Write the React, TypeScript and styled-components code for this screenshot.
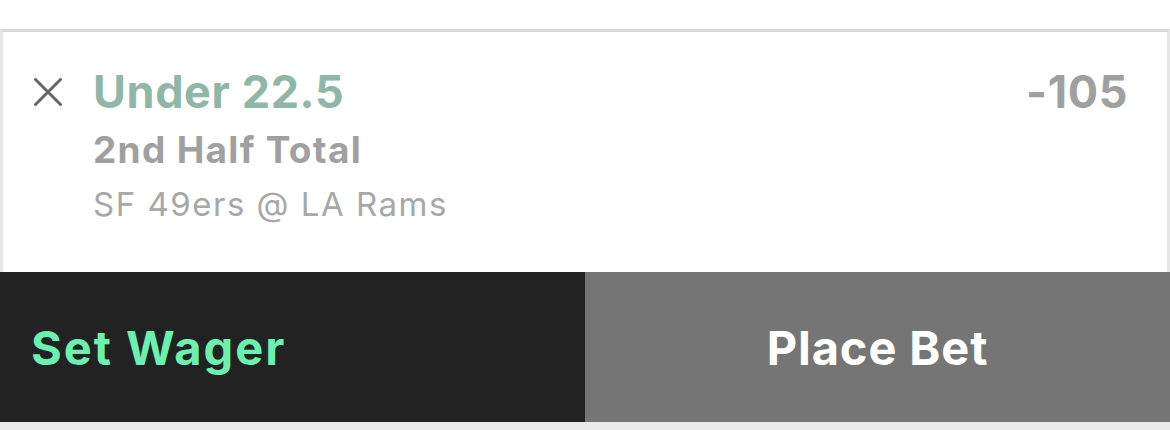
import React from "react";
import styled, { createGlobalStyle } from "styled-components";

const Global = createGlobalStyle`
  html, body { margin: 0; padding: 0; background: #ffffff; }
  body { font-family: Inter, "Noto Sans", sans-serif; -webkit-font-smoothing: antialiased; }
`;

const Page = styled.div`
  width: 1170px;
  height: 430px;
  display: flex;
  flex-direction: column;
  background: #ffffff;
  overflow: hidden;
`;

const TopSpace = styled.div`
  height: 29px;
  flex: none;
`;

const Card = styled.div`
  height: 243px;
  flex: none;
  box-sizing: border-box;
  border-top: 3px solid #d9d9d9;
  border-left: 3px solid #e6e6e6;
  border-right: 3px solid #e6e6e6;
  display: flex;
  align-items: flex-start;
  padding: 46px 39px 0 31px;
`;

const CloseButton = styled.button`
  width: 28px;
  height: 28px;
  padding: 0;
  border: none;
  background: none;
  flex: none;
  display: flex;
  color: #666666;
`;

const Details = styled.div`
  flex: 1;
  margin-left: 31px;
  margin-top: -13px;
  display: flex;
  flex-direction: column;
`;

const Headline = styled.div`
  display: flex;
  justify-content: space-between;
  align-items: baseline;
`;

const Selection = styled.span`
  font-size: 45px;
  line-height: 54px;
  font-weight: 700;
  color: #8fb6a6;
  letter-spacing: 0.6px;
`;

const Odds = styled.span`
  font-size: 45px;
  line-height: 54px;
  font-weight: 700;
  color: #a0a0a0;
  letter-spacing: 0.6px;
`;

const Market = styled.div`
  margin-top: 9px;
  font-size: 37px;
  line-height: 44px;
  font-weight: 700;
  color: #a0a0a0;
  letter-spacing: 1.3px;
`;

const Matchup = styled.div`
  margin-top: 12px;
  font-size: 33px;
  line-height: 40px;
  font-weight: 400;
  color: #a8a8a8;
  letter-spacing: 1.5px;
`;

const ActionRow = styled.div`
  height: 150px;
  flex: none;
  display: grid;
  grid-template-columns: 585px 1fr;
`;

const ActionButton = styled.button<{ $variant: "wager" | "place" }>`
  border: none;
  margin: 0;
  display: flex;
  align-items: center;
  justify-content: ${(p) => (p.$variant === "wager" ? "flex-start" : "center")};
  padding: ${(p) => (p.$variant === "wager" ? "0 0 0 31px" : "0")};
  background: ${(p) => (p.$variant === "wager" ? "#222222" : "#757575")};
  color: ${(p) => (p.$variant === "wager" ? "#6cf0b0" : "#ffffff")};
  font-family: Inter, "Noto Sans", sans-serif;
  font-size: 47px;
  font-weight: 700;
  letter-spacing: ${(p) => (p.$variant === "wager" ? "2px" : "0.9px")};
`;

const BottomStrip = styled.div`
  flex: 1;
  background: #eaebea;
`;

export default function App() {
  return (
    <>
      <Global />
      <Page>
        <TopSpace />
        <Card>
          <CloseButton aria-label="Remove">
            <svg width="28" height="28" viewBox="0 0 28 28">
              <path d="M1.5 1.5 L26.5 26.5 M26.5 1.5 L1.5 26.5" stroke="currentColor" strokeWidth="3" strokeLinecap="round" />
            </svg>
          </CloseButton>
          <Details>
            <Headline>
              <Selection>Under 22.5</Selection>
              <Odds>-105</Odds>
            </Headline>
            <Market>2nd Half Total</Market>
            <Matchup>SF 49ers @ LA Rams</Matchup>
          </Details>
        </Card>
        <ActionRow>
          <ActionButton $variant="wager">Set Wager</ActionButton>
          <ActionButton $variant="place">Place Bet</ActionButton>
        </ActionRow>
        <BottomStrip />
      </Page>
    </>
  );
}
